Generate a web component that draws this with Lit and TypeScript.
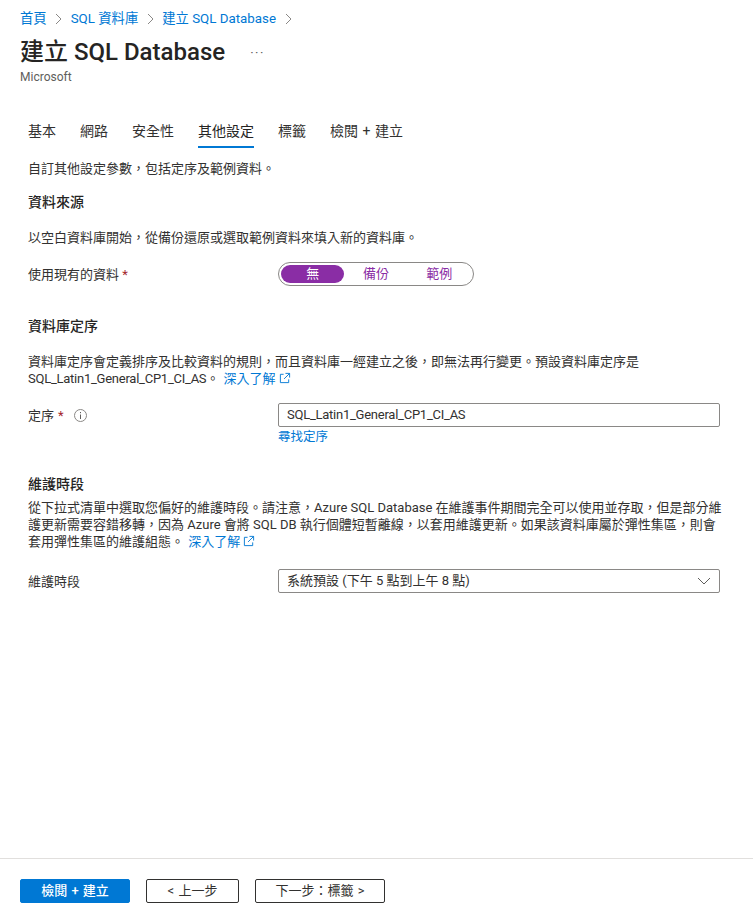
import { LitElement, html, css, svg } from 'lit';
import { customElement } from 'lit/decorators.js';

const TABS = ['基本', '網路', '安全性', '其他設定', '標籤', '檢閱 + 建立'];
const ACTIVE_TAB = '其他設定';
const CRUMBS = ['首頁', 'SQL 資料庫', '建立 SQL Database'];

const chevron = svg`<path d="M1 1l5 5-5 5" fill="none" stroke="#8a8886" stroke-width="1"/>`;
const external = svg`<path d="M5 2.5H1.5v9h9V8M7 1.5h4.5V6M11.5 1.5L5.5 7.5" fill="none" stroke="#0078d4" stroke-width="1"/>`;

@customElement('app-root')
export class AppRoot extends LitElement {
    static override styles = css`
        :host {
            display: flex;
            flex-direction: column;
            height: 921px;
            background: #fff;
            color: #323130;
            font-family: Roboto, 'Noto Sans CJK TC', sans-serif;
            font-size: 13px;
            line-height: 17px;
            overflow: hidden;
        }
        a {
            color: #0078d4;
            text-decoration: none;
        }
        .head {
            padding: 10px 20px 0;
        }
        .crumbs {
            display: flex;
            align-items: center;
            gap: 8.5px;
            height: 17px;
            font-size: 13.33px;
        }
        .crumbs svg {
            width: 7px;
            height: 12px;
        }
        .title-row {
            display: flex;
            align-items: center;
            margin-top: 7px;
            height: 36px;
        }
        h1 {
            margin: 0;
            font-size: 24px;
            line-height: 36px;
            font-weight: 500;
            color: #252423;
        }
        .more {
            margin-left: 25px;
            font-size: 13px;
            color: #605e5c;
            letter-spacing: 1.5px;
        }
        .publisher {
            font-size: 12px;
            line-height: 14px;
            color: #605e5c;
        }
        .tabs {
            display: flex;
            gap: 24px;
            margin: 36px 0 0;
            padding: 0 28px;
            font-size: 14px;
        }
        .tab {
            height: 28px;
            line-height: 22px;
            white-space: nowrap;
            box-sizing: border-box;
            word-spacing: 1px;
        }
        .tab.active {
            color: #252423;
            border-bottom: 2px solid #0078d4;
        }
        .body {
            flex: 1;
            padding: 12px 33px 0 28px;
        }
        p {
            margin: 0;
        }
        h2 {
            margin: 0;
            font-size: 14px;
            line-height: 17px;
            font-weight: 500;
            color: #252423;
        }
        .intro {
            margin-bottom: 17px;
        }
        .source-text {
            margin-top: 18px;
        }
        .line {
            white-space: nowrap;
        }
        .latin {
            letter-spacing: -0.25px;
        }
        .row {
            display: grid;
            grid-template-columns: 250px 1fr;
            align-items: center;
        }
        .req {
            color: #a4262c;
        }
        .toggle {
            display: flex;
            box-sizing: border-box;
            width: 196px;
            height: 24px;
            padding: 2px;
            border: 1px solid #8a8886;
            border-radius: 12px;
        }
        .seg {
            flex: 1;
            text-align: center;
            line-height: 18px;
            border-radius: 9px;
            color: #8a2da5;
        }
        .seg.on {
            background: #8a2da5;
            color: #fff;
        }
        .field {
            box-sizing: border-box;
            height: 24px;
            line-height: 22px;
            padding: 0 8px;
            border: 1px solid #8a8886;
            border-radius: 2px;
            display: flex;
            justify-content: space-between;
            align-items: center;
        }
        .field svg {
            width: 14px;
            height: 8px;
        }
        .label {
            display: flex;
            align-items: center;
            gap: 4px;
        }
        .info {
            width: 13px;
            height: 13px;
            margin-left: 6px;
        }
        .find {
            font-size: 12.5px;
            line-height: 16px;
            margin-top: 2px;
        }
        .ext {
            width: 12px;
            height: 12px;
            vertical-align: -1px;
        }
        .more-link {
            margin-left: 1px;
        }
        .footer {
            display: flex;
            gap: 16px;
            height: 63px;
            box-sizing: border-box;
            padding: 20px 20px 0;
            border-top: 1px solid #e1dfdd;
        }
        button {
            height: 24px;
            box-sizing: border-box;
            padding: 0;
            border: 1px solid #323130;
            border-radius: 2px;
            background: #fff;
            color: #323130;
            font: inherit;
            line-height: 22px;
            word-spacing: 1px;
        }
        button.primary {
            width: 110px;
            background: #0078d4;
            border-color: #0078d4;
            color: #fff;
            font-weight: 500;
        }
        button.prev {
            width: 93px;
        }
        button.next {
            width: 130px;
        }
    `;

    private _external() {
        return html`<svg class="ext" viewBox="0 0 13 13">${external}</svg>`;
    }

    override render() {
        return html`
            <div class="head">
                <div class="crumbs">
                    ${CRUMBS.map(
                        (c) => html`<a href="#">${c}</a><svg viewBox="0 0 7 12">${chevron}</svg>`
                    )}
                </div>
                <div class="title-row">
                    <h1>建立 SQL Database</h1>
                    <span class="more">···</span>
                </div>
                <div class="publisher">Microsoft</div>
            </div>
            <div class="tabs">
                ${TABS.map(
                    (t) => html`<div class="tab ${t === ACTIVE_TAB ? 'active' : ''}">${t}</div>`
                )}
            </div>
            <div class="body">
                <p class="intro">自訂其他設定參數&#xFF0C;包括定序及範例資料。</p>
                <h2>資料來源</h2>
                <p class="source-text">以空白資料庫開始&#xFF0C;從備份還原或選取範例資料來填入新的資料庫。</p>
                <div class="row" style="margin-top:16px">
                    <div>使用現有的資料 <span class="req">*</span></div>
                    <div class="toggle">
                        <div class="seg on">無</div>
                        <div class="seg">備份</div>
                        <div class="seg">範例</div>
                    </div>
                </div>
                <h2 style="margin-top:32px">資料庫定序</h2>
                <div style="margin-top:18px">
                    <div class="line">資料庫定序會定義排序及比較資料的規則&#xFF0C;而且資料庫一經建立之後&#xFF0C;即無法再行變更。預設資料庫定序是</div>
                    <div class="line">
                        <span class="latin">SQL_Latin1_General_CP1_CI_AS</span>。
                        <a class="more-link" href="#">深入了解 ${this._external()}</a>
                    </div>
                </div>
                <div class="row" style="margin-top:16px">
                    <div class="label">
                        定序 <span class="req">*</span>
                        <svg class="info" viewBox="0 0 13 13">
                            <circle cx="6.5" cy="6.5" r="6" fill="none" stroke="#8a8886" />
                            <path d="M6.5 5.5v4.5M6.5 3v1.2" stroke="#605e5c" fill="none" />
                        </svg>
                    </div>
                    <div class="field"><span class="latin">SQL_Latin1_General_CP1_CI_AS</span></div>
                </div>
                <div class="row">
                    <div></div>
                    <a class="find" href="#">尋找定序</a>
                </div>
                <h2 style="margin-top:31px">維護時段</h2>
                <div style="margin-top:6px">
                    <div class="line">從下拉式清單中選取您偏好的維護時段。請注意&#xFF0C;Azure SQL Database 在維護事件期間完全可以使用並存取&#xFF0C;但是部分維</div>
                    <div class="line">護更新需要容錯移轉&#xFF0C;因為 Azure 會將 SQL DB 執行個體短暫離線&#xFF0C;以套用維護更新。如果該資料庫屬於彈性集區&#xFF0C;則會</div>
                    <div class="line">
                        套用彈性集區的維護組態。
                        <a class="more-link" href="#">深入了解 ${this._external()}</a>
                    </div>
                </div>
                <div class="row" style="margin-top:19px">
                    <div>維護時段</div>
                    <div class="field">
                        系統預設 (下午 5 點到上午 8 點)
                        <svg viewBox="0 0 14 8">
                            <path d="M1 1l6 6 6-6" fill="none" stroke="#605e5c" />
                        </svg>
                    </div>
                </div>
            </div>
            <div class="footer">
                <button class="primary">檢閱 + 建立</button>
                <button class="prev">&lt; 上一步</button>
                <button class="next">下一步&#xFF1A;標籤 &gt;</button>
            </div>
        `;
    }
}
